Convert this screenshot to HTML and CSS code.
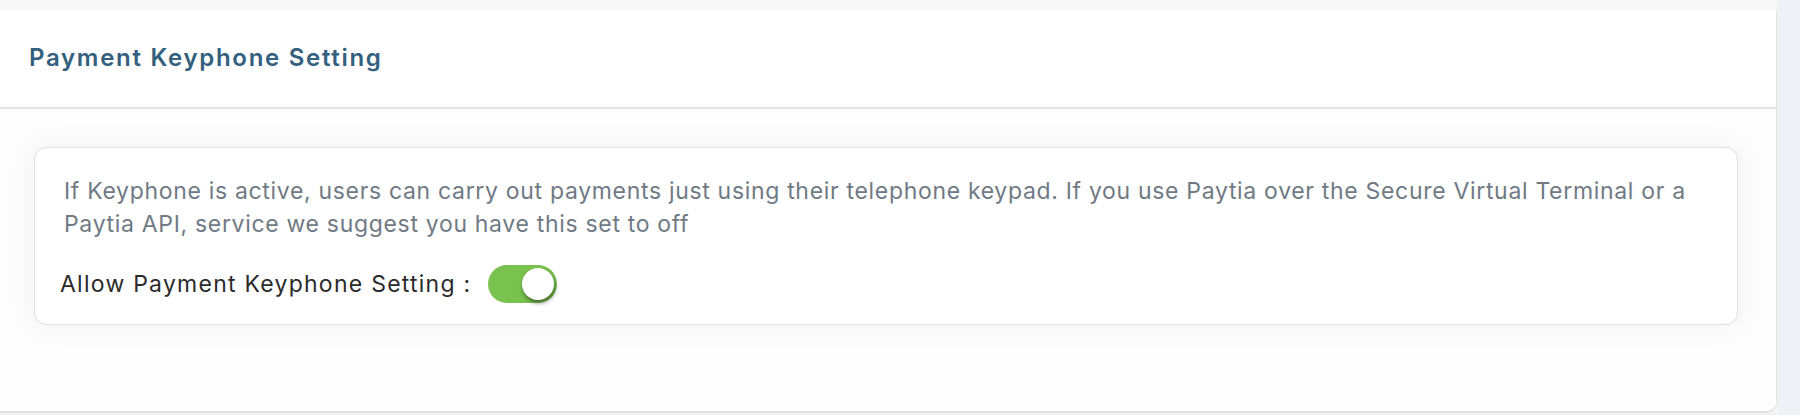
FILE: index.html
```html
<!DOCTYPE html>
<html lang="en">
<head>
  <meta charset="UTF-8">
  <title>Payment Keyphone Setting</title>
  <link rel="stylesheet" href="styles.css">
</head>
<body>
  <div class="page">
    <div class="card">
      <div class="card-header">
        <h2>Payment Keyphone Setting</h2>
      </div>
      <div class="card-body">
        <div class="setting-box">
          <p class="help">If Keyphone is active, users can carry out payments just using their telephone keypad. If you use Paytia over the Secure Virtual Terminal or a Paytia API, service we suggest you have this set to off</p>
          <div class="setting-row">
            <label for="keyphone">Allow Payment Keyphone Setting :</label>
            <label class="switch">
              <input type="checkbox" id="keyphone" checked>
              <span class="slider"></span>
            </label>
          </div>
        </div>
      </div>
    </div>
  </div>
</body>
</html>
```

FILE: styles.css
```css
body {
  margin: 0;
  background: #eef2f7;
  font-family: Inter, "DejaVu Sans", sans-serif;
}
.page {
  width: 1777px;
  padding-top: 10px;
  background: #f8f8f8;
}
.card {
  background: #fdfdfd;
  border-right: 1px solid #e2e2e2;
  border-bottom: 2px solid #e2e2e2;
  border-bottom-right-radius: 10px;
  box-sizing: border-box;
  height: 403px;
}
.card-header {
  background: #fff;
  height: 99px;
  box-sizing: border-box;
  border-bottom: 2px solid #e3e3e3;
  padding: 33px 29px 0;
}
.card-header h2 {
  margin: 0;
  font-size: 24px;
  line-height: 30px;
  letter-spacing: 1.7px;
  font-weight: 600;
  color: #32607e;
}
.card-body {
  padding: 38px 38px 0 34px;
}
.setting-box {
  background: #fff;
  border: 1px solid #e0e0e0;
  border-radius: 12px;
  box-shadow: 0 0 30px rgba(0, 0, 0, 0.05);
  padding: 27px 25px 0;
  height: 178px;
  box-sizing: border-box;
}
.help {
  margin: 0 0 24px 4px;
  font-size: 23px;
  line-height: 33px;
  letter-spacing: 0.68px;
  color: #707a84;
}
.setting-row {
  display: flex;
  align-items: center;
  gap: 17px;
}
.setting-row label {
  font-size: 23px;
  letter-spacing: 1.25px;
  color: #2b2b2b;
}
.switch {
  position: relative;
  display: inline-block;
  width: 69px;
  height: 38px;
}
.switch input {
  opacity: 0;
  width: 0;
  height: 0;
}
.slider {
  position: absolute;
  inset: 0;
  background: #7ac24f;
  border-radius: 19px;
}
.slider::before {
  content: "";
  position: absolute;
  width: 32px;
  height: 32px;
  top: 3px;
  left: 3px;
  background: #fff;
  border-radius: 50%;
  box-shadow: 1px 3px 4px rgba(0, 0, 0, 0.45);
}
.switch input:checked + .slider::before {
  left: 34px;
}
```
